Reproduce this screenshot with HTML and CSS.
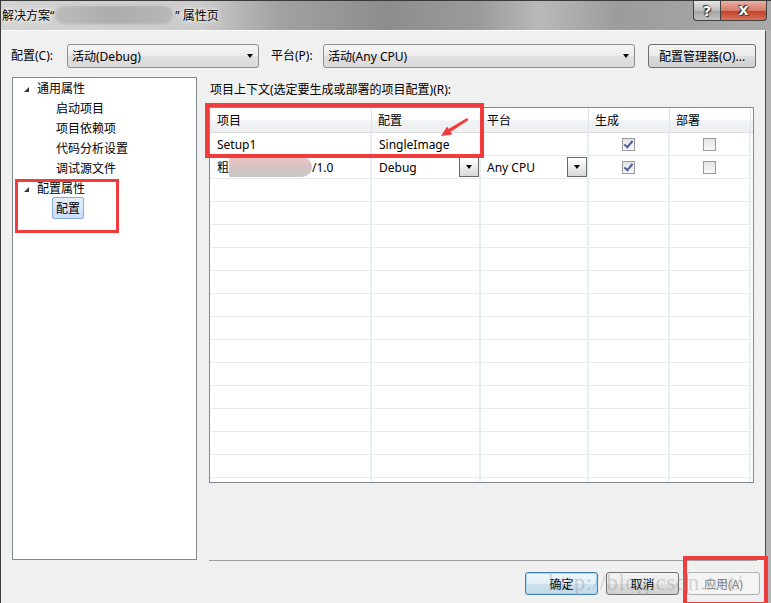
FILE: index.html
```html
<!DOCTYPE html>
<html lang="zh-CN">
<head>
    <meta charset="UTF-8">
    <title>解决方案 属性页</title>
    <link rel="stylesheet" href="styles.css">
</head>
<body>
<div class="window">
    <div class="titlebar">
        <div class="title">
            <span>解决方案“</span><span class="blurred"></span><span>” 属性页</span>
        </div>
        <div class="caption-buttons">
            <div class="cap help">?</div>
            <div class="cap close">X</div>
        </div>
    </div>

    <div class="client">
        <div class="toolbar">
            <span class="lbl lbl-config">配置(C):</span>
            <div class="combo combo-config"><span>活动(Debug)</span><i class="arrow"></i></div>
            <span class="lbl lbl-platform">平台(P):</span>
            <div class="combo combo-platform"><span>活动(Any CPU)</span><i class="arrow"></i></div>
            <div class="btn btn-manager">配置管理器(O)...</div>
        </div>

        <div class="main">
            <div class="tree">
                <div class="node parent"><i class="expander"></i>通用属性</div>
                <div class="node child">启动项目</div>
                <div class="node child">项目依赖项</div>
                <div class="node child">代码分析设置</div>
                <div class="node child">调试源文件</div>
                <div class="node parent"><i class="expander"></i>配置属性</div>
                <div class="node child"><span class="selected">配置</span></div>
            </div>

            <div class="content">
                <div class="caption">项目上下文(选定要生成或部署的项目配置)(R):</div>
                <div class="grid">
                    <div class="grid-head">
                        <div class="hcell">项目</div>
                        <div class="hcell">配置</div>
                        <div class="hcell">平台</div>
                        <div class="hcell">生成</div>
                        <div class="hcell">部署</div>
                        <div class="hcell"></div>
                    </div>
                    <div class="grid-row">
                        <div class="cell">Setup1</div>
                        <div class="cell">SingleImage</div>
                        <div class="cell"></div>
                        <div class="cell center"><i class="check on"></i></div>
                        <div class="cell center"><i class="check"></i></div>
                        <div class="cell"></div>
                    </div>
                    <div class="grid-row">
                        <div class="cell">粗<span class="smudge"></span>/1.0</div>
                        <div class="cell">Debug<span class="drop"><i class="arrow"></i></span></div>
                        <div class="cell">Any CPU<span class="drop"><i class="arrow"></i></span></div>
                        <div class="cell center"><i class="check on"></i></div>
                        <div class="cell center"><i class="check"></i></div>
                        <div class="cell"></div>
                    </div>
                    <div class="grid-row"><div class="cell"></div><div class="cell"></div><div class="cell"></div><div class="cell"></div><div class="cell"></div><div class="cell"></div></div>
                    <div class="grid-row"><div class="cell"></div><div class="cell"></div><div class="cell"></div><div class="cell"></div><div class="cell"></div><div class="cell"></div></div>
                    <div class="grid-row"><div class="cell"></div><div class="cell"></div><div class="cell"></div><div class="cell"></div><div class="cell"></div><div class="cell"></div></div>
                    <div class="grid-row"><div class="cell"></div><div class="cell"></div><div class="cell"></div><div class="cell"></div><div class="cell"></div><div class="cell"></div></div>
                    <div class="grid-row"><div class="cell"></div><div class="cell"></div><div class="cell"></div><div class="cell"></div><div class="cell"></div><div class="cell"></div></div>
                    <div class="grid-row"><div class="cell"></div><div class="cell"></div><div class="cell"></div><div class="cell"></div><div class="cell"></div><div class="cell"></div></div>
                    <div class="grid-row"><div class="cell"></div><div class="cell"></div><div class="cell"></div><div class="cell"></div><div class="cell"></div><div class="cell"></div></div>
                    <div class="grid-row"><div class="cell"></div><div class="cell"></div><div class="cell"></div><div class="cell"></div><div class="cell"></div><div class="cell"></div></div>
                    <div class="grid-row"><div class="cell"></div><div class="cell"></div><div class="cell"></div><div class="cell"></div><div class="cell"></div><div class="cell"></div></div>
                    <div class="grid-row"><div class="cell"></div><div class="cell"></div><div class="cell"></div><div class="cell"></div><div class="cell"></div><div class="cell"></div></div>
                    <div class="grid-row"><div class="cell"></div><div class="cell"></div><div class="cell"></div><div class="cell"></div><div class="cell"></div><div class="cell"></div></div>
                    <div class="grid-row"><div class="cell"></div><div class="cell"></div><div class="cell"></div><div class="cell"></div><div class="cell"></div><div class="cell"></div></div>
                    <div class="grid-row"><div class="cell"></div><div class="cell"></div><div class="cell"></div><div class="cell"></div><div class="cell"></div><div class="cell"></div></div>
                    <div class="grid-row"><div class="cell"></div><div class="cell"></div><div class="cell"></div><div class="cell"></div><div class="cell"></div><div class="cell"></div></div>
                </div>
                <div class="separator"></div>
            </div>
        </div>

        <div class="actions">
            <div class="btn btn-default">确定</div>
            <div class="btn">取消</div>
            <div class="btn btn-disabled">应用(A)</div>
        </div>
    </div>

    <!-- annotations drawn on top of the screenshot -->
    <div class="mark mark-tree"></div>
    <div class="mark mark-grid"></div>
    <div class="mark mark-apply"></div>
    <svg class="pointer" width="771" height="603" viewBox="0 0 771 603">
        <polygon points="467,118 468.5,120 450.4,132 448.4,129" fill="#f03c3c"/>
        <polygon points="441,136 447,126.6 452.3,134.4" fill="#f03c3c"/>
    </svg>
    <div class="watermark">http://blog.csdn.net/</div>
</div>
</body>
</html>
```

FILE: styles.css
```css
* {
    box-sizing: border-box;
}
body {
    margin: 0;
    font-family: "Noto Sans", "Noto Sans CJK SC", sans-serif;
    font-size: 12px;
    color: #000;
    background: #b9b9b9;
}
.window {
    position: relative;
    width: 771px;
    height: 603px;
    overflow: hidden;
    background: #b4b4b4;
    border-left: 1px solid #3a3a3a;
}

/* title bar */
.titlebar {
    height: 30px;
    display: flex;
    justify-content: space-between;
    border-top: 1px solid #3a3a3a;
    background: linear-gradient(to right, #d3d3d3 0%, #cbcbcb 26%, #a2a2a2 36%, #8d8d8d 50%, #9b9b9b 62%, #b9b9b9 70%, #9c9c9c 80%, #a9a9a9 100%);
}
.title {
    display: flex;
    align-items: center;
    padding-left: 1px;
    height: 28px;
    text-shadow: 0 0 6px #fff, 0 0 3px #fff;
}
.blurred {
    width: 118px;
    height: 18px;
    margin: 0 2px 0 1px;
    border-radius: 9px;
    background: linear-gradient(to right, #bcbcbc, #acacac 50%, #b8b8b8);
    filter: blur(1px);
}
.caption-buttons {
    display: flex;
    margin-right: 4px;
    height: 20px;
}
.cap {
    height: 20px;
    display: flex;
    align-items: center;
    justify-content: center;
    color: #fff;
    font-family: "DejaVu Sans", sans-serif;
    font-weight: bold;
    font-size: 14px;
    border: 1px solid #404040;
    border-top: none;
    text-shadow: 0 0 1px #222, 1px 1px 1px #333, -1px -1px 1px #333;
}
.help {
    width: 27px;
    border-right: none;
    border-radius: 0 0 0 4px;
    background: linear-gradient(#e6e6e6, #bdbdbd 50%, #a2a2a2 51%, #c2c2c2);
}
.close {
    width: 47px;
    border-radius: 0 0 4px 0;
    font-size: 13px;
    background: linear-gradient(#eab2a5, #d87a68 50%, #c13e26 51%, #d9725a);
}

/* client area */
.client {
    width: 765px;
    height: 573px;
    background: #f0f0f0;
    border-top: 1px solid #fafafa;
    border-right: 1px solid #4a4a4a;
    padding-left: 9px;
}
.toolbar {
    display: flex;
    align-items: center;
    height: 24px;
    margin-top: 13px;
}
.lbl {
    line-height: 16px;
    padding-left: 1px;
}
.lbl-config {
    width: 57px;
}
.lbl-platform {
    width: 53px;
    margin-left: 11px;
}
.combo {
    height: 24px;
    display: flex;
    align-items: center;
    justify-content: space-between;
    padding: 0 5px 0 4px;
    border: 1px solid #8e8f8f;
    border-radius: 3px;
    background: linear-gradient(#f5f5f5, #ececec 50%, #e0e0e0 51%, #dadada);
}
.combo-config {
    width: 192px;
}
.combo-platform {
    width: 312px;
}
.arrow {
    width: 0;
    height: 0;
    border-left: 3.5px solid transparent;
    border-right: 3.5px solid transparent;
    border-top: 4px solid #000;
}
.btn {
    height: 24px;
    width: 73px;
    display: flex;
    align-items: center;
    justify-content: center;
    border: 1px solid #707070;
    border-radius: 3px;
    background: linear-gradient(#f3f3f3, #ebebeb 50%, #dddddd 51%, #cfcfcf);
}
.btn-manager {
    width: 108px;
    margin-left: 13px;
}

/* main area */
.main {
    display: flex;
    margin-top: 9px;
}
.tree {
    width: 185px;
    height: 483px;
    margin-left: 2px;
    background: #fff;
    border: 1px solid #828790;
}
.node {
    height: 20px;
    display: flex;
    align-items: center;
}
.parent {
    padding-left: 11px;
}
.child {
    padding-left: 43px;
}
.expander {
    width: 0;
    height: 0;
    margin-right: 8px;
    border-left: 5px solid transparent;
    border-bottom: 5px solid #3a3a3a;
    margin-top: 2px;
}
.selected {
    padding: 1px 3px;
    margin-left: -4px;
    border: 1px solid #84acdd;
    border-radius: 2px;
    background: linear-gradient(#e4effd, #c9defb);
}
.content {
    width: 548px;
    margin-left: 12px;
}
.caption {
    padding-top: 5px;
    line-height: 16px;
    padding-left: 1px;
}
.grid {
    margin-top: 9px;
    width: 545px;
    height: 376px;
    overflow: hidden;
    background: #fff;
    border: 1px solid #828790;
}
.grid-head,
.grid-row {
    display: grid;
    grid-template-columns: 162px 109px 108px 81px 81px 1fr;
}
.grid-head {
    height: 25px;
    border-bottom: 1px solid #dcdcdc;
    background: linear-gradient(#ffffff, #ffffff 45%, #f1f2f4 55%, #eeeff1);
}
.hcell {
    display: flex;
    align-items: center;
    padding-left: 6px;
    border-right: 1px solid #e3e4e6;
}
.hcell:first-child {
    padding-left: 7px;
}
.grid-row {
    height: 23px;
}
.cell {
    display: flex;
    align-items: center;
    padding-left: 6px;
    border-right: 2px solid #eaeef6;
    border-bottom: 1px solid #ebebeb;
}
.cell:first-child,
.cell:nth-child(2) {
    padding-left: 7px;
}
.cell.center {
    justify-content: center;
    padding-left: 0;
}
.smudge {
    width: 83px;
    height: 20px;
    background: linear-gradient(to bottom, #efc4c4, #d5c3c3 50%, #c8c8c8);
    border-radius: 2px 10px 10px 2px;
    filter: blur(0.6px);
}
.drop {
    margin-left: auto;
    width: 20px;
    height: 20px;
    display: flex;
    align-items: center;
    justify-content: center;
    border: 1px solid #6a6a6a;
    background: linear-gradient(#ffffff, #ededed 50%, #d8d8d8);
}
.check {
    position: relative;
    width: 13px;
    height: 13px;
    border: 1px solid #9a9a9a;
    background: linear-gradient(#e4e4e4, #f8f8f8);
}
.check.on::after {
    content: "";
    position: absolute;
    left: 3px;
    top: 0;
    width: 3px;
    height: 7px;
    border-right: 2px solid #4a5f99;
    border-bottom: 2px solid #4a5f99;
    transform: rotate(40deg);
}
.separator {
    margin-top: 77px;
    height: 1px;
    background: #a0a0a0;
}
.actions {
    display: flex;
    justify-content: flex-end;
    gap: 8px;
    margin-top: 11px;
    padding-right: 5px;
    height: 23px;
}
.actions .btn {
    height: 23px;
}
.btn-default {
    border-color: #3c7fb1;
    box-shadow: inset 0 0 0 1px #a9d6f3;
    background: linear-gradient(#eef6fb, #e2eef6 50%, #cfe2ee 51%, #c3d9e8);
}
.btn-disabled {
    color: #838383;
    border-color: #adb2b5;
    background: #f4f4f4;
}

/* annotations */
.mark {
    position: absolute;
    border: 3px solid #f03c3c;
}
.mark-tree {
    left: 14px;
    top: 179px;
    width: 104px;
    height: 54px;
}
.mark-grid {
    left: 204px;
    top: 103px;
    width: 279px;
    height: 55px;
    border-width: 4px;
}
.mark-apply {
    left: 682px;
    top: 556px;
    width: 85px;
    height: 50px;
    border-width: 4px;
}
.pointer {
    position: absolute;
    left: -1px;
    top: 0;
    pointer-events: none;
}
.watermark {
    position: absolute;
    left: 547px;
    top: 570px;
    font-family: "Liberation Serif", serif;
    font-size: 23px;
    letter-spacing: 0.5px;
    color: rgba(140, 140, 140, 0.35);
}
```
